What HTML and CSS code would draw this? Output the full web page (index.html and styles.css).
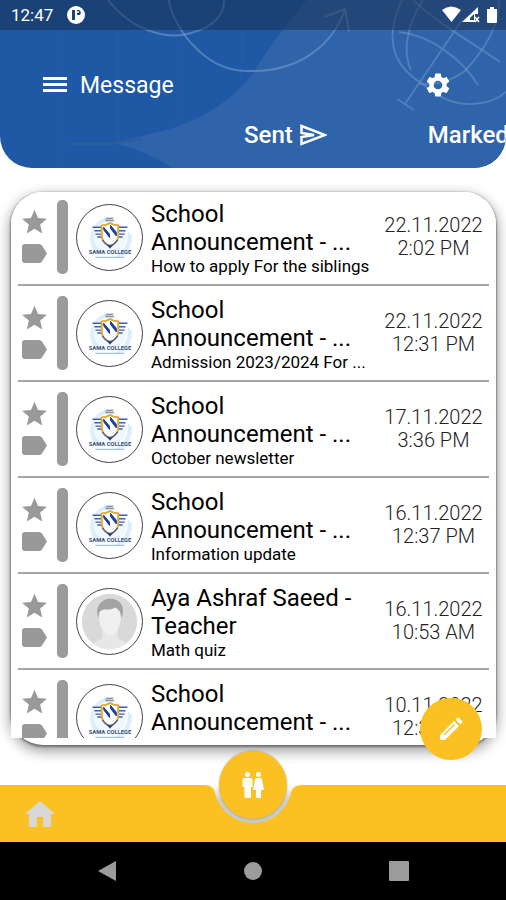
FILE: index.html
```
<!DOCTYPE html>
<html lang="en">
<head>
<meta charset="utf-8">
<meta name="viewport" content="width=device-width, initial-scale=1">
<title>Message</title>
<link rel="stylesheet" href="styles.css">
</head>
<body>
<svg class="defs" aria-hidden="true">
  <symbol id="star" viewBox="2 2 20 19"><path d="M12 17.27 18.18 21l-1.64-7.03L22 9.24l-7.19-.61L12 2 9.19 8.63 2 9.24l5.46 4.73L5.82 21z"/></symbol>
  <symbol id="tag" viewBox="0 0 25 19"><path d="M3 0h14q2 0 3 1.500l5 8-5 8q-1 1.500-3 1.500H3q-3 0-3-3V3q0-3 3-3z"/></symbol>
  <symbol id="crest" viewBox="0 0 67 67">
    <path d="M19 49A22 22 0 0 1 17 23Q26 9 42 13Q25 15 21 28Q18 39 25 50zM44 54Q56 48 57 32L52 26Q55 42 40 53z" fill="#dceefa"/>
    <circle cx="34" cy="33" r="17" fill="#f0f8fd"/>
    <path d="M29 16h9M30 14h7" stroke="#8297ad" stroke-width="1.500"/>
    <path d="M16 23h10M18 26.500h8M19 30h7M21 33h6M52 23H42M50 26.500h-8M49 30h-7M47 33h-6" stroke="#3c63a4" stroke-width="1.500"/>
    <path d="M25.500 21Q30 21 34 18.500Q38 21 42.500 21V32Q42 39 34 43Q26 39 25.500 32z" fill="#fff" stroke="#e8a62b" stroke-width="2"/>
    <path d="M26 36Q29 40 34 43Q39 40 42 36" fill="none" stroke="#52668e" stroke-width="1.500"/>
    <path d="M27.500 25.500l6 8v-3.500l-6-7zM34.500 24l6 8v-4l-6-7z" fill="#1b3f9a" stroke="#1b3f9a"/>
    <path d="M31 41h6l-3 4z" fill="#2d4278"/>
    <text x="34" y="51" text-anchor="middle" class="crest-name">SAMA COLLEGE</text>
    <path d="M19 54h30" stroke="#9cc3e2" stroke-width="1.500"/>
  </symbol>
  <symbol id="person" viewBox="0 0 67 67">
    <clipPath id="face"><circle cx="33.500" cy="33.500" r="28.500"/></clipPath>
    <g clip-path="url(#face)">
      <path d="M0 0h67v67H0z" fill="#d9d9d9"/>
      <path d="M13 64q2-10 13-13V40h16v11q11 3 13 13z" fill="#e7e7e7"/>
      <path d="M23 24q0-10 11-10t11 10v8q-1 8-5 12t-6 4-6-4-5-12z" fill="#f0f0f0"/>
      <path d="M22 30q-3-9 1-14 4-6 11-6 8 0 12 6 3 5 0 14l-2-7q-3-3-4-4-6 3-12 2-4 1-5 3z" fill="#a3a3a3"/>
    </g>
  </symbol>
</svg>

<header class="top">
  <svg class="art" viewBox="0 0 506 168" preserveAspectRatio="xMaxYMin slice" aria-hidden="true">
    <path d="M307 0Q269 45 254 72Q222 114 166 130L114 143Q145 150 172 168H506V0z" fill="#2f63aa"/>
    <path d="M58 30v132M119 30v115M181 30v90M241 30v50" stroke="#2b61ab" stroke-opacity=".6"/>
    <path d="M68 144h41l32-5v3" fill="none" stroke="#2b5e9f" stroke-width="2"/>
    <g fill="none" stroke="#83a5d4" stroke-opacity=".5" stroke-width="2">
      <path d="M108 0C137 36 174 39 191 33C214 27 225 14 224 0"/>
      <path d="M169 0C170 19 200 71 247 71C302 73 334 42 345 9M325 17l20-8 4 22"/>
    </g>
    <g fill="none" stroke="#83a5d4" stroke-opacity=".4" stroke-width="2">
      <path d="M402 0C387 31 387 63 423 84C454 113 490 106 506 92"/>
      <path d="M423 0C404 29 404 55 411 70M499 0Q500 33 465 71Q445 86 420 84"/>
      <path d="M413 0C440 25 470 41 500 62M399 32C430 35 462 59 478 85M462 20L405 104M397 99l17 11"/>
    </g>
  </svg>
  <div class="status">
    <span>12:47</span>
    <svg class="status-app" viewBox="0 0 18 18" aria-hidden="true"><circle cx="9" cy="9" r="9" fill="#fff"/><path d="M5 4h3v10H5zM10 4h2q3 2 1 5h-3z" fill="#1c4276"/><circle cx="11" cy="6" r="1" fill="#fff"/></svg>
    <svg class="status-system" viewBox="0 0 56 18" aria-hidden="true"><g fill="#fff"><path d="M0 4Q9-3 19 4L9.500 16z"/><path d="M20 16 36 1V8h-3v8z"/><path d="M48 1h4v2h3v13q0 1-1 1h-8q-1 0-1-1V3h3z"/></g><path d="M28 12l4-4v6h-4z" fill="#24497d"/><path d="M33 11l4 5M37 11l-4 5" stroke="#fff" stroke-width="1.500"/></svg>
  </div>
  <div class="bar">
    <button class="icon menu" aria-label="Menu"><svg viewBox="0 0 24 18"><path d="M0 1h24v3H0zM0 7h24v3H0zM0 13h24v3H0z" fill="#fff"/></svg></button>
    <h1>Message</h1>
    <button class="icon gear" aria-label="Settings"><svg viewBox="2 2 20 20"><path fill="#fff" d="M19.140 12.940c.04-.3.060-.61.060-.94 0-.32-.02-.64-.07-.94l2.030-1.580a.49.490 0 0 0 .12-.61l-1.920-3.320a.49.490 0 0 0-.59-.22l-2.390.96c-.5-.38-1.030-.7-1.620-.94l-.36-2.540a.48.480 0 0 0-.48-.41h-3.840c-.24 0-.43.170-.47.410l-.36 2.540c-.59.240-1.130.570-1.620.940l-2.390-.96a.48.480 0 0 0-.59.220L2.740 8.870a.48.480 0 0 0 .12.610l2.030 1.580c-.05.300-.09.630-.09.940s.02.640.07.940l-2.030 1.580a.49.490 0 0 0-.12.610l1.920 3.320c.12.220.37.290.59.220l2.390-.96c.5.380 1.030.7 1.620.940l.36 2.540c.05.240.240.410.480.410h3.840c.24 0 .44-.17.470-.41l.36-2.540c.59-.24 1.130-.56 1.620-.94l2.390.96c.22.080.47 0 .59-.22l1.920-3.320a.48.480 0 0 0-.12-.61zM12 15.600A3.600 3.600 0 1 1 12 8.400a3.600 3.600 0 0 1 0 7.200z"/></svg></button>
  </div>
  <nav class="tabs" aria-label="Folders">
    <a href="#sent">Sent <svg viewBox="0 0 27 22" aria-hidden="true"><path d="M1.500 2 25 11 1.500 20V13L14 11 1.500 9z" fill="none" stroke="#fff" stroke-width="2.500"/></svg></a>
    <a href="#marked">Marked</a>
  </nav>
</header>

<main>
  <section class="card" aria-label="Messages">
    <ul class="list">
      <li class="row">
        <div class="marks"><button aria-label="Star"><svg class="star"><use href="#star"/></svg></button><button aria-label="Label"><svg class="tag"><use href="#tag"/></svg></button></div>
        <span class="stripe"></span>
        <svg class="avatar"><use href="#crest"/></svg>
        <div class="text"><h2>School Announcement - ...</h2><p>How to apply For the siblings</p></div>
        <time>22.11.2022<br>2:02 PM</time>
      </li>
      <li class="row">
        <div class="marks"><button aria-label="Star"><svg class="star"><use href="#star"/></svg></button><button aria-label="Label"><svg class="tag"><use href="#tag"/></svg></button></div>
        <span class="stripe"></span>
        <svg class="avatar"><use href="#crest"/></svg>
        <div class="text"><h2>School Announcement - ...</h2><p>Admission 2023/2024 For ...</p></div>
        <time>22.11.2022<br>12:31 PM</time>
      </li>
      <li class="row">
        <div class="marks"><button aria-label="Star"><svg class="star"><use href="#star"/></svg></button><button aria-label="Label"><svg class="tag"><use href="#tag"/></svg></button></div>
        <span class="stripe"></span>
        <svg class="avatar"><use href="#crest"/></svg>
        <div class="text"><h2>School Announcement - ...</h2><p>October newsletter</p></div>
        <time>17.11.2022<br>3:36 PM</time>
      </li>
      <li class="row">
        <div class="marks"><button aria-label="Star"><svg class="star"><use href="#star"/></svg></button><button aria-label="Label"><svg class="tag"><use href="#tag"/></svg></button></div>
        <span class="stripe"></span>
        <svg class="avatar"><use href="#crest"/></svg>
        <div class="text"><h2>School Announcement - ...</h2><p>Information update</p></div>
        <time>16.11.2022<br>12:37 PM</time>
      </li>
      <li class="row">
        <div class="marks"><button aria-label="Star"><svg class="star"><use href="#star"/></svg></button><button aria-label="Label"><svg class="tag"><use href="#tag"/></svg></button></div>
        <span class="stripe"></span>
        <svg class="avatar"><use href="#person"/></svg>
        <div class="text"><h2>Aya Ashraf Saeed - Teacher</h2><p>Math quiz</p></div>
        <time>16.11.2022<br>10:53 AM</time>
      </li>
      <li class="row">
        <div class="marks"><button aria-label="Star"><svg class="star"><use href="#star"/></svg></button><button aria-label="Label"><svg class="tag"><use href="#tag"/></svg></button></div>
        <span class="stripe"></span>
        <svg class="avatar"><use href="#crest"/></svg>
        <div class="text"><h2>School Announcement - ...</h2></div>
        <time>10.11.2022<br>12:31 PM</time>
      </li>
    </ul>
  </section>
  <button class="compose" aria-label="Compose"><svg viewBox="0 0 24 24"><path d="M1 23v-5L15 4l5 5L6 23z" fill="#fff"/><path d="M16.500 2.500 18 1q1-1 2 0l3 3q1 1 0 2l-1.500 1.500z" fill="#fff"/><path d="M5 18 15.500 7.500" stroke="#fbc021" stroke-width="1.500"/></svg></button>
</main>

<nav class="bottom" aria-label="Main">
  <div class="side"><a class="home" href="#home" aria-label="Home"><svg viewBox="0 0 30 26"><path d="M15 0 30 13h-4v13h-8V16h-6v10H4V13H0z" fill="#d8d8d8"/></svg></a></div>
  <svg class="notch" viewBox="0 0 96 57" aria-hidden="true">
    <defs><linearGradient id="rim" x2="0" y2="1"><stop offset="0" stop-color="#fff"/><stop offset=".4" stop-color="#cdcdcd"/><stop offset="1" stop-color="#c8c8c8"/></linearGradient></defs>
    <path d="M0 0h96v57H0z" fill="#fbc021"/>
    <path d="M0 0Q8 0 10 8A39 39 0 0 0 86 8Q88 0 96 0z" fill="url(#rim)"/>
  </svg>
  <div class="side"></div>
  <button class="people" aria-label="Students"><svg viewBox="0 0 22 26"><g fill="#fff"><circle cx="5.500" cy="2.500" r="2.500"/><path d="M2 6h7q1.500 0 1.500 2v7H9v10q0 1-1 1H3.500q-1 0-1-1V15H.5V8Q.5 6 2 6z"/><circle cx="16.500" cy="2.500" r="2.500"/><path d="M14.500 6h4q1 0 1.500 1.500L22 18h-3v7q0 1-1 1h-3q-1 0-1-1v-7h-3l2-10.500Q13.500 6 14.500 6z"/></g></svg></button>
</nav>

<footer class="system">
  <button aria-label="Back"><svg viewBox="0 0 20 22"><path d="M19 1v20L1 11z" fill="#9b9b9b"/></svg></button>
  <button aria-label="Home screen"><svg viewBox="0 0 20 22"><circle cx="10" cy="11" r="9" fill="#9b9b9b"/></svg></button>
  <button aria-label="Recent apps"><svg viewBox="0 0 20 22"><rect y="1" width="20" height="20" rx="1" fill="#9b9b9b"/></svg></button>
</footer>
</body>
</html>
```
FILE: styles.css
```
* { box-sizing: border-box; }

body {
  margin: 0;
  height: 100vh;
  display: flex;
  flex-direction: column;
  overflow: hidden;
  background: #fff;
  color: #000;
  font-family: Roboto, "Liberation Sans", sans-serif;
}

h1, h2, p, ul { margin: 0; padding: 0; }
svg { display: block; }
a { color: inherit; text-decoration: none; }
button {
  display: grid;
  place-items: center;
  padding: 0;
  border: 0;
  background: none;
}
.defs { position: absolute; width: 0; height: 0; }
.crest-name { font: bold 6px Roboto, sans-serif; fill: #36507f; }

.top {
  position: relative;
  flex: none;
  height: 168px;
  overflow: hidden;
  border-radius: 0 0 32px 32px;
  background: #1f58a5;
  color: #fff;
}
.art { position: absolute; inset: 0; width: 100%; height: 100%; }
.status {
  position: relative;
  display: flex;
  align-items: center;
  gap: 14px;
  height: 30px;
  padding: 0 8px 0 11px;
  background: rgba(24, 44, 72, .5);
  font-size: 17px;
}
.status-app { width: 18px; height: 18px; }
.status-system { width: 56px; height: 18px; margin-left: auto; }
.bar {
  position: relative;
  display: flex;
  align-items: center;
  height: 56px;
  margin-top: 27px;
  padding: 0 56px 0 43px;
}
.menu svg { width: 24px; height: 18px; }
.bar h1 { margin-left: 13px; font-size: 23px; font-weight: 400; }
.gear { margin-left: auto; }
.gear svg { width: 24px; height: 24px; }
.tabs {
  position: relative;
  display: flex;
  gap: 101px;
  margin-top: 4px;
  padding-left: 244px;
  font-size: 24px;
  font-weight: 500;
  line-height: 36px;
}
.tabs a { display: flex; align-items: center; gap: 7px; }
.tabs svg { width: 27px; height: 22px; }

main {
  position: relative;
  flex: 1;
  min-height: 0;
  padding: 24px 10px 40px 11px;
}
.card {
  height: 100%;
  padding-bottom: 7px;
  border-radius: 32px;
  background: #fff;
  box-shadow: 0 1px 2px 1px rgba(0, 0, 0, .35), 0 5px 14px 1px rgba(0, 0, 0, .4);
}
.list {
  height: 100%;
  overflow: hidden;
  border-radius: 32px 32px 0 0;
  background: #fff;
  list-style: none;
}
.row {
  display: flex;
  align-items: center;
  margin: 0 7px;
  padding: 10px 6px 10px 0;
  border-bottom: 2px solid #a6a6a6;
}
.row:first-child { padding-top: 8px; }
.marks {
  display: grid;
  justify-items: center;
  align-self: flex-start;
  gap: 10px;
  width: 32px;
  margin: 9px 7px 0 0;
  fill: #999;
}
.star { width: 25px; height: 25px; }
.tag { width: 25px; height: 19px; }
.stripe {
  flex: none;
  width: 11px;
  height: 74px;
  margin-right: 8px;
  border-radius: 5px;
  background: #9b9b9b;
}
.avatar {
  flex: none;
  width: 67px;
  height: 67px;
  margin-right: 8px;
  border: 1px solid #444;
  border-radius: 50%;
}
.text {
  flex: 1;
  align-self: flex-start;
  min-width: 0;
  height: 74px;
}
.text h2 {
  font-size: 24px;
  font-weight: 400;
  line-height: 28px;
}
.text p {
  font-size: 17px;
  line-height: 20px;
  white-space: nowrap;
}
.row time {
  width: 99px;
  margin-left: 7px;
  color: #222;
  font-size: 20px;
  font-weight: 300;
  line-height: 23px;
  text-align: center;
}

.compose {
  position: absolute;
  right: 24px;
  bottom: 25px;
  width: 62px;
  height: 62px;
  border-radius: 50%;
  background: #fbc021;
}
.compose svg { width: 24px; height: 24px; }

.bottom {
  position: relative;
  flex: none;
  display: flex;
  height: 57px;
}
.side {
  flex: 1;
  display: flex;
  align-items: center;
  padding-left: 25px;
  background: #fbc021;
}
.home svg { width: 30px; height: 26px; }
.notch { width: 96px; height: 57px; }
.people {
  position: absolute;
  left: calc(50% - 34px);
  top: -34px;
  width: 68px;
  height: 68px;
  border-radius: 50%;
  background: #fbc021;
  box-shadow: 0 0 2px rgba(0, 0, 0, .3);
}
.people svg { width: 22px; height: 26px; }

.system {
  flex: none;
  display: flex;
  justify-content: center;
  gap: 126px;
  height: 58px;
  background: #000;
}
.system svg { width: 20px; height: 22px; }
```
